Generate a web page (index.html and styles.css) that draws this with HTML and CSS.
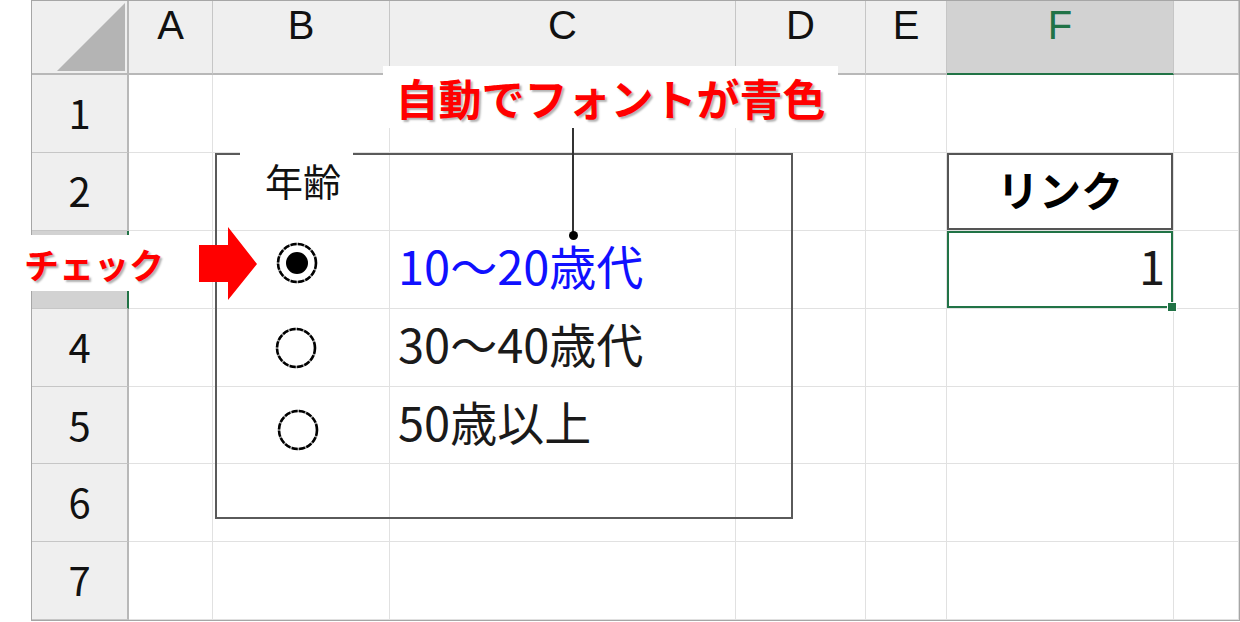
FILE: index.html
```html
<!DOCTYPE html>
<html lang="ja">
<head>
  <meta charset="UTF-8" />
  <title>オプションボタン - リンク</title>
  <link rel="stylesheet" href="styles.css">
</head>
<body>

<div class="sheet">
  <!-- column headers -->
  <div class="head corner">
    <svg width="95" height="72" viewBox="0 0 95 72"><polygon points="25,70 93,70 93,2" fill="#b4b4b4"/></svg>
  </div>
  <div class="head">A</div>
  <div class="head">B</div>
  <div class="head">C</div>
  <div class="head">D</div>
  <div class="head">E</div>
  <div class="head head-sel">F</div>
  <div class="head"></div>

  <!-- row 1 -->
  <div class="row-head">1</div>
  <div class="cell"></div><div class="cell"></div><div class="cell"></div><div class="cell"></div>
  <div class="cell"></div><div class="cell"></div><div class="cell"></div>

  <!-- row 2 -->
  <div class="row-head">2</div>
  <div class="cell"></div><div class="cell"></div><div class="cell"></div><div class="cell"></div>
  <div class="cell"></div>
  <div class="cell link-head">リンク</div>
  <div class="cell"></div>

  <!-- row 3 (its number is hidden under the label) -->
  <div class="row-head row-sel"></div>
  <div class="cell"></div><div class="cell"></div>
  <div class="cell blue">10～20歳代</div>
  <div class="cell"></div><div class="cell"></div>
  <div class="cell link-val">1</div>
  <div class="cell"></div>

  <!-- row 4 -->
  <div class="row-head">4</div>
  <div class="cell"></div><div class="cell"></div>
  <div class="cell">30～40歳代</div>
  <div class="cell"></div><div class="cell"></div><div class="cell"></div><div class="cell"></div>

  <!-- row 5 -->
  <div class="row-head">5</div>
  <div class="cell"></div><div class="cell"></div>
  <div class="cell">50歳以上</div>
  <div class="cell"></div><div class="cell"></div><div class="cell"></div><div class="cell"></div>

  <!-- row 6 -->
  <div class="row-head">6</div>
  <div class="cell"></div><div class="cell"></div><div class="cell"></div><div class="cell"></div>
  <div class="cell"></div><div class="cell"></div><div class="cell"></div>

  <!-- row 7 -->
  <div class="row-head">7</div>
  <div class="cell"></div><div class="cell"></div><div class="cell"></div><div class="cell"></div>
  <div class="cell"></div><div class="cell"></div><div class="cell"></div>

  <!-- floating form controls -->
  <div class="group-box">
    <div class="group-label">年齢</div>
    <svg class="radio r1" width="44" height="44" viewBox="0 0 44 44">
      <circle cx="22" cy="22" r="19" fill="#fff" stroke="#a0a0a0" stroke-width="2.5"/>
      <circle cx="22" cy="22" r="19" fill="none" stroke="#000" stroke-width="2.5" stroke-dasharray="6 1.5"/>
      <circle cx="22" cy="22" r="11" fill="#000"/>
    </svg>
    <svg class="radio r2" width="44" height="44" viewBox="0 0 44 44">
      <circle cx="22" cy="22" r="19" fill="#fff" stroke="#a0a0a0" stroke-width="2.5"/>
      <circle cx="22" cy="22" r="19" fill="none" stroke="#000" stroke-width="2.5" stroke-dasharray="6 1.5"/>
    </svg>
    <svg class="radio r3" width="44" height="44" viewBox="0 0 44 44">
      <circle cx="22" cy="22" r="19" fill="#fff" stroke="#a0a0a0" stroke-width="2.5"/>
      <circle cx="22" cy="22" r="19" fill="none" stroke="#000" stroke-width="2.5" stroke-dasharray="6 1.5"/>
    </svg>
  </div>

  <!-- annotations -->
  <div class="callout">自動でフォントが青色</div>
  <div class="leader"></div>
  <div class="leader-dot"></div>

  <div class="check-label">チェック</div>
  <svg class="arrow" width="58" height="73" viewBox="0 0 58 73">
    <polygon points="0,18 29,18 29,0 58,37 29,73 29,55 0,55" fill="#ff0000"/>
  </svg>
</div>

</body>
</html>
```

FILE: styles.css
```css
* { box-sizing: border-box; }
body {
  margin: 0;
  background: #fff;
  font-family: "Noto Sans CJK JP", "Noto Sans", sans-serif;
  color: #1a1a1a;
}

.sheet {
  position: relative;
  margin-left: 31px;
  width: 1209px;
  border: 1px solid #a6a6a6;
  display: grid;
  grid-template-columns: 97px 84px 177px 346px 130px 81px 227px 65px;
  grid-template-rows: 74px 78px 78px 78px 78px 77px 78px 78px;
}

/* headers */
.head {
  background: #efefef;
  border-right: 1px solid #c6c6c6;
  border-bottom: 2px solid #b8b8b8;
  display: flex;
  justify-content: center;
  padding-top: 2px;
  font-family: "Liberation Sans", Arial, sans-serif;
  font-size: 40px;
  line-height: 45px;
  color: #111;
}

.corner {
  border-right: 2px solid #b8b8b8;
  display: block;
  padding-top: 0;
}
.corner svg { display: block; }

.head-sel {
  background: #d2d2d2;
  color: #217346;
  border-bottom-color: #217346;
}

.row-head {
  background: #efefef;
  border-right: 2px solid #b8b8b8;
  border-bottom: 1px solid #c6c6c6;
  display: flex;
  align-items: center;
  justify-content: center;
  padding-bottom: 3px;
  font-size: 40px;
  color: #111;
}

.row-sel {
  background: #d2d2d2;
  border-right-color: #217346;
}

/* cells */
.cell {
  border-right: 1px solid #e1e1e1;
  border-bottom: 1px solid #e1e1e1;
  display: flex;
  align-items: center;
  padding: 0 8px 10px;
  font-size: 47px;
  white-space: nowrap;
  color: #1a1a1a;
}

.blue { color: #1010ff; }

.link-head {
  justify-content: center;
  padding-bottom: 6px;
  font-size: 42px;
  font-weight: bold;
  color: #000;
  box-shadow: inset 0 0 0 2px #555;
}

.link-val {
  position: relative;
  justify-content: flex-end;
  box-shadow: inset 0 0 0 2px #217346;
}
.link-val::after {
  content: "";
  position: absolute;
  right: -4px;
  bottom: -4px;
  width: 8px;
  height: 8px;
  background: #217346;
  border: 1px solid #fff;
}

/* group box with option buttons */
.group-box {
  position: absolute;
  left: 183px;
  top: 152px;
  width: 578px;
  height: 366px;
  border: 2px solid #5a5a5a;
}

.group-label {
  position: absolute;
  left: 23px;
  top: -4px;
  width: 113px;
  height: 52px;
  background: #fff;
  padding: 6px 0 0 25px;
  font-size: 38px;
  line-height: 46px;
  color: #111;
}

.radio { position: absolute; display: block; }
.r1 { left: 58px; top: 86px; }
.r2 { left: 57px; top: 171px; }
.r3 { left: 59px; top: 253px; }

/* callouts */
.callout {
  position: absolute;
  left: 351px;
  top: 65px;
  width: 455px;
  height: 62px;
  background: #fff;
  display: flex;
  align-items: center;
  justify-content: center;
  font-size: 43px;
  font-weight: bold;
  color: #ff0000;
  text-shadow: 2px 2px 2px rgba(0,0,0,0.3);
}

.leader {
  position: absolute;
  left: 540px;
  top: 127px;
  width: 2px;
  height: 105px;
  background: #333;
}

.leader-dot {
  position: absolute;
  left: 537px;
  top: 230px;
  width: 9px;
  height: 9px;
  border-radius: 50%;
  background: #000;
}

.check-label {
  position: absolute;
  left: -14px;
  top: 234px;
  width: 155px;
  height: 56px;
  background: #fff;
  padding-left: 6px;
  display: flex;
  align-items: center;
  font-size: 35px;
  font-weight: bold;
  color: #ff0000;
  text-shadow: 2px 2px 2px rgba(0,0,0,0.3);
}

.arrow {
  position: absolute;
  left: 167px;
  top: 226px;
}
```
